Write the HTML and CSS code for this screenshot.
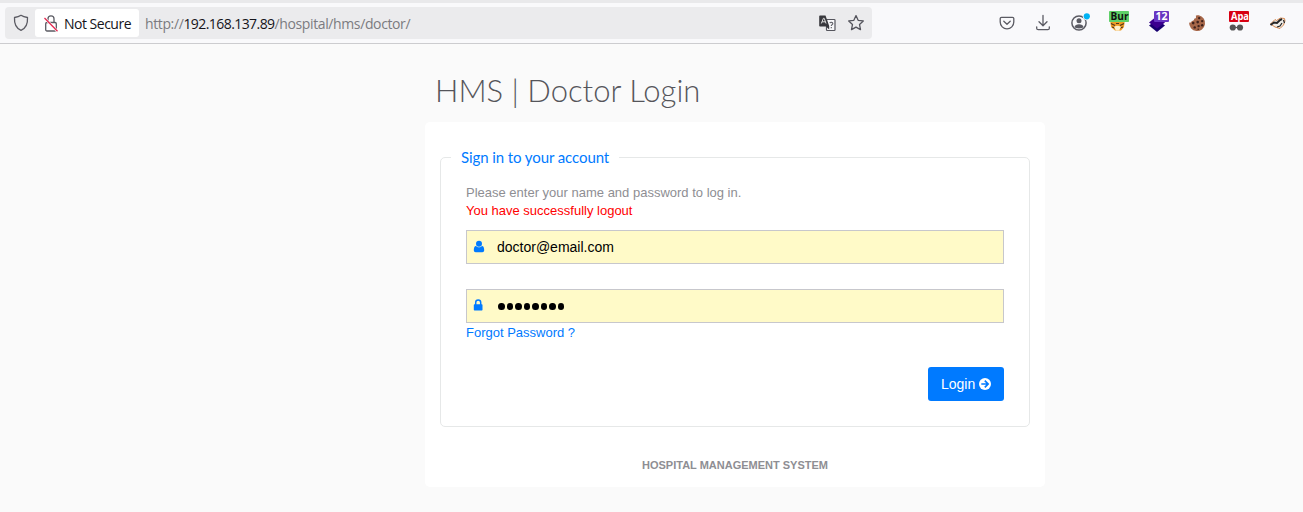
FILE: index.html
```html
<!DOCTYPE html>
<html lang="en">
<head>
<meta charset="utf-8">
<title>HMS | Doctor Login</title>
<link rel="stylesheet" href="styles.css">
</head>
<body>
<header class="toolbar">
  <div class="urlbar">
    <svg class="shield" width="16" height="18" viewBox="0 0 16 18"><path d="M8 1.3C6 2.8 3.6 3.3 1.5 3.5C1.1 10 3 14.2 8 16.3C13 14.2 14.9 10 14.5 3.5C12.400 3.300 10 2.800 8 1.300Z" fill="none" stroke="#5b5b63" stroke-width="1.3" stroke-linejoin="round"/></svg>
    <div class="identity">
      <svg width="14" height="17" viewBox="0 0 14 17"><g fill="none" stroke="#5b5b63" stroke-width="1.3"><rect x="1.700" y="7.500" width="10.600" height="8.500" rx="1.300"/><path d="M4 8V3.800a3 3 0 0 1 6 0V8"/></g><path d="M.5 3L13.500 16.300" stroke="#fff" stroke-width="2.500"/><path d="M.5 3L13.500 16.300" stroke="#e22850" stroke-width="1.300"/></svg>
      <span class="not-secure">Not Secure</span>
    </div>
    <div class="url">http://<b>192.168.137.89</b>/hospital/hms/doctor/</div>
    <svg class="translate" width="17" height="17" viewBox="0 0 17 17"><rect x="7.500" y="4.500" width="8.500" height="11" rx=".7" fill="#f8f8fa" stroke="#55555d" stroke-width="1.200"/><path d="M1 .5h5.500l3.700 10.500v3.500l-3.200-3H1a.8.8 0 0 1-.8-.8V1.300A.8.800 0 0 1 1 .5Z" fill="#38383d"/><path d="M2.300 8.500L4.400 3.300h.8L7 8.500M3 6.800h3.300" stroke="#ddd" fill="none"/><path d="M10.800 8c.5-1 3-1 3 .4S12.300 9.500 12.300 11M12.300 12v1.200" stroke="#66666d" stroke-width="1.200" fill="none"/></svg>
    <svg class="star" width="18" height="18" viewBox="0 0 18 18"><path d="M9 1.600l2.150 4.700 5.150.6-3.800 3.500 1 5.200L9 13.100l-4.500 2.500 1-5.200-3.800-3.500 5.150-.6Z" fill="none" stroke="#55555d" stroke-width="1.300" stroke-linejoin="round"/></svg>
  </div>
  <nav class="tools">
    <svg class="compact" viewBox="0 0 22 22"><g fill="none" stroke="#5b5b63" stroke-width="1.300" stroke-linecap="round" stroke-linejoin="round"><path d="M5.500 5.300h11a1.300 1.300 0 0 1 1.300 1.300v3.500a6.800 6.800 0 0 1-13.600 0v-3.500a1.300 1.300 0 0 1 1.300-1.300Z"/><path d="M7.800 9.300l3.200 3 3.200-3"/></g></svg>
    <svg class="compact" viewBox="0 0 22 22"><g fill="none" stroke="#5b5b63" stroke-width="1.300" stroke-linecap="round" stroke-linejoin="round"><path d="M11 3.500v10M7 9.800l4 4 4-4M4.700 14.800v1.400a1.500 1.500 0 0 0 1.500 1.500h9.600a1.500 1.500 0 0 0 1.500-1.500v-1.400"/></g></svg>
    <svg viewBox="0 0 22 22"><circle cx="11" cy="11" r="7.100" fill="none" stroke="#5b5b63" stroke-width="1.500"/><circle cx="11" cy="8.800" r="2.500" fill="#5b5b63"/><path d="M6.500 15.200c0-4 9-4 9 0-2.400 1.600-6.600 1.600-9 0Z" fill="#5b5b63"/><circle cx="18.800" cy="4.300" r="4" fill="#f9f9fb"/><circle cx="18.800" cy="4.300" r="3.100" fill="#00b3f4"/></svg>
    <svg viewBox="0 0 22 22"><path d="M2 7h15l-1 8-3 3.500H7L3 15Z" fill="#ee9b24"/><path d="M3 11.500l4 2M16 11.500l-4 2M4 15l3 1M15 15l-3 1M8 11.500h3" stroke="#51351b" stroke-width="1.200"/><path d="M6 15q3.500-2.500 7 0l-2 3.500H8Z" fill="#fff0ca"/><rect x="1" y="-1" width="20" height="11" rx=".8" fill="#5fd068"/><text x="2.500" y="8" class="badge-text dark" textLength="18" lengthAdjust="spacingAndGlyphs">Bur</text></svg>
    <svg viewBox="0 0 22 22"><path d="M1 13.500l8-6 8 6-8 6.500Z" fill="#180070"/><path d="M1 10.500L9 4l8 6.500-8 6Z" fill="#3b008f"/><rect x="6" y="-1" width="15" height="11" rx="1" fill="#6736c2"/><text x="7.500" y="8" class="badge-text" textLength="12" lengthAdjust="spacingAndGlyphs">12</text></svg>
    <svg viewBox="0 0 22 22"><g transform="translate(-1.800 -.4)"><path d="M9 3.600A8 8 0 1 0 18.700 11c-1.500.3-2.500-.4-2.600-1.600-1.700.1-2.600-.8-2.400-2.200C12 7.200 11.300 5.700 12 4.100c-1-.5-2-.6-3-.5Z" transform="matrix(-1 0 0 1 21.600 0)" fill="#a76749"/><g fill="#3e211c"><circle cx="13" cy="6.500" r="1.200"/><circle cx="7" cy="11.500" r="1.300"/><circle cx="11.500" cy="10.500" r="1.300"/><circle cx="16" cy="9.500" r="1.200"/><circle cx="8.500" cy="15.800" r="1.200"/><circle cx="12.400" cy="14.500" r="1.200"/><circle cx="16" cy="13.700" r="1.200"/><circle cx="12" cy="17.600" r=".8"/></g></g></svg>
    <svg viewBox="0 0 22 22"><path d="M5 15.500h7" stroke="#555" stroke-width="1.200"/><circle cx="4.800" cy="15.500" r="3.100" fill="#555"/><circle cx="12" cy="15.500" r="3.100" fill="#555"/><rect x="1" y="-1" width="20" height="11" rx="1" fill="#d70012"/><text x="3" y="8" class="badge-text" textLength="18" lengthAdjust="spacingAndGlyphs">Apa</text></svg>
    <svg viewBox="0 0 22 22"><path d="M2.500 12L7 7.500l1.500 1 4-2.500 4 .5.500 2.500-1.500 4-3.500 3.500-5-1.500Z" fill="#efede8" stroke="#d88a50" stroke-width="1"/><path d="M2.500 13l3.500-2.500 3 .5 3-3 2-1" fill="none" stroke="#252525" stroke-width="2"/><path d="M9 15l3-1 2-3M15.500 8l1 3" fill="none" stroke="#252525" stroke-width="1.200"/></svg>
  </nav>
</header>
<main class="login">
  <h1>HMS | Doctor Login</h1>
  <section class="card">
    <form class="panel">
      <div class="legend">Sign in to your account</div>
      <p class="hint">Please enter your name and password to log in.</p>
      <p class="message">You have successfully logout</p>
      <div class="field email"><svg width="12" height="14" viewBox="0 0 12 14"><circle cx="6" cy="3.800" r="3" fill="#007aff"/><path d="M3 6C1.400 6 .8 8 .8 10.300c0 1.300.8 1.900 1.900 1.900h6.600c1.100 0 1.900-.6 1.900-1.900C11.200 8 10.600 6 9 6 7.500 7.700 4.500 7.700 3 6Z" fill="#007aff"/></svg><span>doctor@email.com</span></div>
      <div class="field password"><svg width="12" height="14" viewBox="0 0 12 14"><path d="M2.700 6V3.600a2.500 2.500 0 0 1 5 0v2.400" fill="none" stroke="#007aff" stroke-width="1.500"/><rect x=".8" y="5.200" width="8.700" height="6.300" rx=".7" fill="#007aff"/></svg><span class="dots"><i></i><i></i><i></i><i></i><i></i><i></i><i></i><i></i></span></div>
      <a class="forgot">Forgot Password ?</a>
      <button class="submit" type="button"><span>Login</span><svg width="12" height="12" viewBox="0 0 12 12"><circle cx="6" cy="6" r="6" fill="#fff"/><path d="M2.300 6h6.300M5.800 2.700L9.100 6 5.800 9.300" fill="none" stroke="#007aff" stroke-width="1.700"/></svg></button>
    </form>
    <footer><span>HOSPITAL MANAGEMENT SYSTEM</span></footer>
  </section>
</main>
</body>
</html>
```
FILE: styles.css
```css
* { box-sizing: border-box; }
body { margin: 0; height: 512px; overflow: hidden; background: #fafafa; font-family: "Liberation Sans", Arial, sans-serif; }
svg { display: block; flex: none; overflow: visible; }
.toolbar { height: 44px; display: flex; justify-content: space-between; background: #f9f9fb; border-top: 3px solid #e9e9eb; border-bottom: 1px solid #cccccf; padding: 4px 13px 0 5px; }
.urlbar { width: 867px; height: 32px; border-radius: 4px; background: #ebebed; display: flex; align-items: center; font: 14px "Open Sans", "Noto Sans", sans-serif; white-space: nowrap; }
.shield { margin-left: 8px; }
.identity { margin-left: 6px; width: 104px; height: 28px; background: #fff; border-radius: 3px; display: flex; align-items: center; padding-left: 9px; gap: 6px; color: #15141a; }
.not-secure { letter-spacing: -.5px; }
.url { margin-left: 6px; color: #7b7b80; letter-spacing: -.38px; }
.url b { font-weight: 400; color: #15141a; letter-spacing: -.57px; }
.translate { margin-left: auto; }
.star { margin: 0 7px 0 11px; }
.tools { display: flex; align-items: center; gap: 18px; height: 32px; }
.tools svg { width: 22px; height: 22px; }
.tools .compact { margin-right: -4px; }
.badge-text { font: bold 10.5px "Open Sans", sans-serif; fill: #fff; }
.badge-text.dark { fill: #111; }
.login { width: 620px; margin-left: 425px; padding-top: 26px; }
h1 { margin: 0 0 0 10px; height: 52px; font: 300 31px/40px Lato, sans-serif; color: #55555a; white-space: nowrap; }
.card { height: 365px; background: #fff; border-radius: 5px; padding: 35px 15px 0; }
.panel { height: 270px; border: 1px solid #e6e8e8; border-radius: 5px; padding: 0 25px; display: flex; flex-direction: column; }
.legend { align-self: flex-start; margin: -12px 0 0 -15px; padding: 0 10px; height: 22px; background: #fff; color: #007aff; font: 15px/22px Lato, sans-serif; letter-spacing: -.09px; white-space: nowrap; }
.hint, .message { margin: 0; font-size: 13px; line-height: 18px; white-space: nowrap; }
.hint { margin-top: 16px; color: #8e8e93; }
.message { color: #f00; }
.field { height: 34px; flex: none; border: 1px solid #c7c7cc; background: #fffac8; display: flex; align-items: center; padding-left: 6px; font-size: 14px; color: #000; }
.email { margin-top: 10px; }
.field span { margin-left: 12px; }
.password { margin-top: 25px; }
.field .dots { display: flex; gap: 2px; margin-left: 13px; padding-top: 1px; }
.dots i { width: 6.500px; height: 7px; border-radius: 50%; background: #000; }
.forgot { margin-top: 1px; font-size: 13px; line-height: 18px; color: #007aff; }
.submit { align-self: flex-end; margin-top: 25px; width: 76px; height: 34px; border: 0; border-radius: 3px; background: #007aff; color: #fff; display: flex; align-items: center; padding: 0 13px; gap: 4px; font: 14px "Liberation Sans", Arial, sans-serif; }
footer { margin-top: 31px; text-align: center; color: #8e8e93; font-weight: bold; font-size: 11px; line-height: 14px; }
```
